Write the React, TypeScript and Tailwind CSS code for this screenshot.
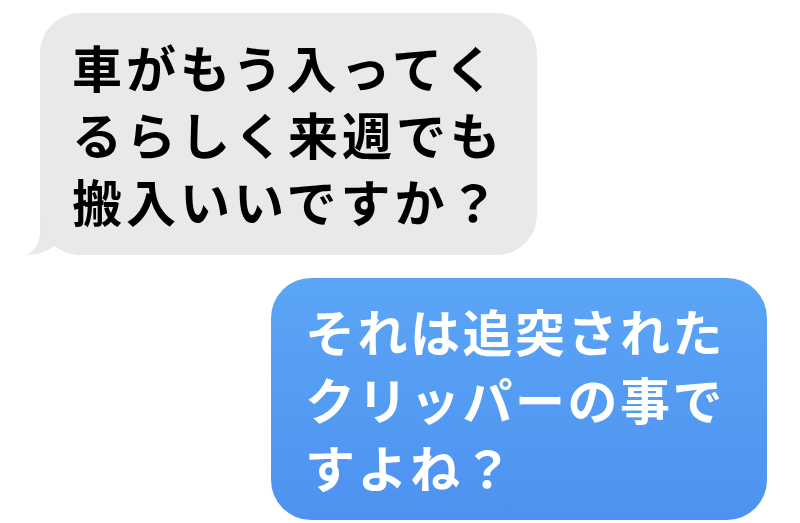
import React from 'react';

const FONT = '"Noto Sans CJK JP", "Noto Sans", sans-serif';

function Tail() {
  // iMessage-style tail on the bottom-left of the received bubble
  return (
    <svg
      className="absolute left-[-14px] bottom-0"
      width="60"
      height="50"
      viewBox="0 0 60 50"
    >
      <path
        d="M14 0 L14 28 C14 38 8 46 1 50 C12 50 22 46 30 40 C36 45 42 50 60 50 L60 0 Z"
        fill="#e9e9eb"
      />
    </svg>
  );
}

export default function App() {
  return (
    <div className="w-[800px] h-[523px] bg-white overflow-hidden" style={{ fontFamily: FONT }}>
      <div className="flex flex-col pt-[13px]">
        {/* received */}
        <div className="relative ml-[40px] w-[497px] h-[242px]">
          <Tail />
          <div className="relative h-full rounded-[40px] bg-[#e9e9eb] pl-[32px] pt-[20px] text-[50px] leading-[67px] font-bold text-black tracking-[4px]">
            車がもう入ってく
            <br />
            るらしく来週でも
            <br />
            搬入いいですか？
          </div>
        </div>

        {/* sent */}
        <div className="ml-[271px] mt-[23px] w-[496px] h-[242px] rounded-[40px] bg-gradient-to-b from-[#5ba5f6] to-[#4e92f0] pl-[34px] pt-[18px] text-[50px] leading-[68px] font-bold text-white tracking-[2.5px]">
          それは追突された
          <br />
          クリッパーの事で
          <br />
          すよね？
        </div>
      </div>
    </div>
  );
}
